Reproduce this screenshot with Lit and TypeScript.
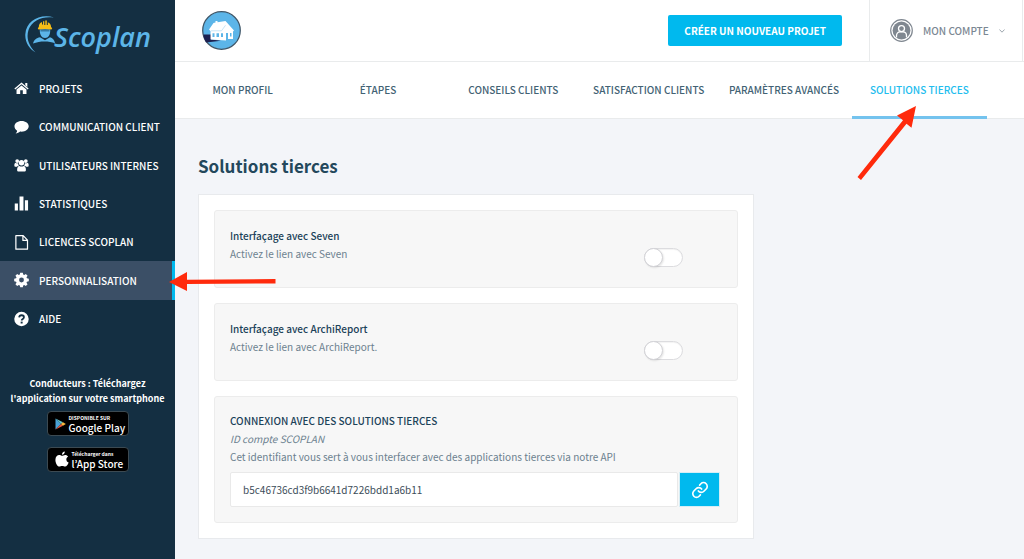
import { LitElement, html, css, svg, type TemplateResult } from "lit";
import { customElement, state } from "lit/decorators.js";
import { classMap } from "lit/directives/class-map.js";

const icons: Record<string, TemplateResult> = {
  home: svg`<path d="M8 2.2 15.6 8.6l-.9 1L8 4 1.300 9.600l-.9-1L8 2.200z"/><path d="M12 2.600h2.200v4.200L12 5z"/><path d="M8 5.200l5.300 4.500v4.600H9.400v-3.900H6.600v3.900H2.700V9.700z"/>`,
  comment: svg`<path d="M8.100 1.600c4.300 0 7.600 2.500 7.600 5.700S12.400 13 8.100 13c-.5 0-1 0-1.500-.1-1.500 1.300-3 1.900-4.800 2 .9-1 1.500-1.900 1.500-3C1.600 10.900.5 9.200.5 7.300c0-3.200 3.300-5.700 7.600-5.700z"/>`,
  users: svg`<circle cx="3.400" cy="3.800" r="2"/><circle cx="12.600" cy="3.800" r="2"/><circle cx="8" cy="5.600" r="2.900"/><path d="M.4 9V7.600C.4 6.300 1.200 5.700 2.400 6c.7.300 1.300.2 1.900 0 .1 1 .4 2 1 2.700-.9 0-1.700.5-2.200 1.100H1.400C.8 9.800.4 9.500.4 9z"/><path d="M15.600 9V7.600c0-1.300-.8-1.900-2-1.600-.7.300-1.300.2-1.900 0-.1 1-.4 2-1 2.700.9 0 1.700.5 2.200 1.100h1.700c.6 0 1-.3 1-.8z"/><path d="M3.300 13.200c0-2.600.8-4 2.400-4.200 1.400.9 3.200.9 4.600 0 1.600.2 2.400 1.600 2.400 4.200 0 1.200-.7 1.800-1.800 1.800H5.100c-1.100 0-1.800-.6-1.800-1.800z"/>`,
  stats: svg`<path d="M.8 8.500h3.400V16H.8zM5.900 1h4.200v15H5.900zM11.600 5h3.400v11h-3.400z"/>`,
  file: svg`<path d="M2 1.200h7.800L14.400 6v9.600H2z M9.500 1.500v4.800h4.700" fill="none" stroke="currentColor" stroke-width="1.300" stroke-linejoin="round"/>`,
  gear: svg`<path fill-rule="evenodd" d="M6.600.2h2.800l.4 2 1.200.5L12.600 1.500l1.900 1.900-1.200 1.700.5 1.100 2 .4v2.800l-2 .4-.5 1.100 1.200 1.700-1.900 1.900-1.700-1.200-1.100.5-.4 2H6.600l-.4-2-1.100-.5-1.700 1.200-1.900-1.900 1.200-1.700-.5-1.100-2-.4V6.600l2-.4.5-1.100-1.200-1.700 1.900-1.900 1.700 1.200 1.100-.5zM8 5.400a2.600 2.600 0 1 0 0 5.200 2.600 2.600 0 0 0 0-5.200z"/>`,
  help: svg`<circle cx="8" cy="8" r="7.700"/><path d="M5.500 6.300C5.600 4.800 6.600 4 8.100 4s2.500.9 2.500 2.100c0 1.800-2.400 1.800-2.400 3.500" fill="none" stroke="#142f42" stroke-width="1.900"/><path d="M7.100 10.800h2.100v2H7.100z" fill="#142f42"/>`,
};

const menu = [
  { label: "PROJETS", icon: "home" },
  { label: "COMMUNICATION CLIENT", icon: "comment" },
  { label: "UTILISATEURS INTERNES", icon: "users" },
  { label: "STATISTIQUES", icon: "stats" },
  { label: "LICENCES SCOPLAN", icon: "file" },
  { label: "PERSONNALISATION", icon: "gear" },
  { label: "AIDE", icon: "help" },
];

const tabs = [
  "MON PROFIL",
  "ÉTAPES",
  "CONSEILS CLIENTS",
  "SATISFACTION CLIENTS",
  "PARAMÈTRES AVANCÉS",
  "SOLUTIONS TIERCES",
];

const base = css`
  *, *::before, *::after { box-sizing: border-box; }
  a { color: inherit; text-decoration: none; }
  button, input { font: inherit; margin: 0; }
  h1, h2, p { margin: 0; }
  svg { display: block; flex: none; }
`;

@customElement("side-bar")
class SideBar extends LitElement {
  static styles = [base, css`
    :host { display: flex; flex-direction: column; background: #142f42; color: #fff; }
    .logo { display: flex; align-items: center; height: 69px; padding-left: 25px; color: #5cb5e8; }
    .name { font: italic 600 27px/36px "Open Sans", sans-serif; margin-left: -3px; padding-top: 4px; }
    .menu { display: grid; grid-auto-rows: 1fr; height: 269px; }
    .item { display: flex; align-items: center; gap: 10px; padding-left: 14px; font-size: 10px; font-weight: 500; border-right: 3px solid transparent; }
    .item.active { background: #3b4f66; border-color: #00b9ee; }
    .item svg { fill: currentColor; }
    .apps { display: flex; flex-direction: column; align-items: center; margin-top: 38px; font-size: 9px; font-weight: 700; line-height: 15px; text-align: center; }
    .badge { display: flex; align-items: center; gap: 3px; width: 82px; height: 25px; padding-left: 7px; border: 1px solid #3c4a52; border-radius: 4px; background: #000; text-align: left; white-space: nowrap; }
    .badge + .badge { margin-top: 11px; }
    .apps p { margin-bottom: 5px; white-space: nowrap; }
    .small { display: block; font-size: 5px; line-height: 7px; }
    .big { display: block; font-size: 10px; font-weight: 500; line-height: 13px; }
  `];
  render() {
    return html`
      <a class="logo" href="#" aria-label="Scoplan">
        <svg width="32" height="40" viewBox="0 0 32 40">
          <path d="M29 2.500C16-1.500 1 5 .3 19.500 0 27.500 4.500 34 10.500 37.500 3.500 30 1 23 3.500 15 7 5 18 .8 29 2.500z" fill="#5cb5e8"/>
          <path d="M14.800 14.500h10.400c.3 5-1.900 8.500-5.200 8.500s-5.500-3.500-5.200-8.500z" fill="#5cb5e8"/>
          <path d="M15.500 15.200h9v1.200h-9z" fill="#2c6a90"/>
          <path d="M8 28.500c1-4 3.500-5.500 7-6.300l5 3 5-3c2.500.8 4.500 2.800 5 6-6-2.300-15-2.500-22 .3z" fill="#5cb5e8"/>
          <path d="M13.800 12c0-2.500 1.200-4.300 3.200-5v2.500h1V6.300h1.300V10h1V5.500h1.500V10h1V7.200c2 .8 3.300 2.500 3.300 4.800l1.100 1.200-.7 1.300c-4-.8-9-.8-13 0l-.7-1.300z" fill="#f6bd16"/>
        </svg>
        <span class="name">Scoplan</span>
      </a>
      <nav class="menu">
        ${menu.map((m) => html`<a href="#" class=${classMap({ item: true, active: m.icon === "gear" })}>
          <svg width="15" height="16" viewBox="0 0 16 16">${icons[m.icon]}</svg><span>${m.label}</span></a>`)}
      </nav>
      <div class="apps">
        <p>Conducteurs : Téléchargez<br />l'application sur votre smartphone</p>
        <a class="badge" href="#">
          <svg width="11" height="12" viewBox="0 0 11 12"><path d="M.5.500 6 6 .5 11.500z" fill="#4aa3d8"/><path d="M.5.500 8 4.300 6 6z" fill="#5fc0c8"/><path d="M.5 11.500 8 7.700 6 6z" fill="#e4573d"/><path d="M8 4.300 10.800 6 8 7.700 6 6z" fill="#f8b93b"/></svg>
          <span><span class="small">DISPONIBLE SUR</span><span class="big">Google Play</span></span>
        </a>
        <a class="badge" href="#">
          <svg width="14" height="17" viewBox="0 0 14 17"><path d="M9.800.5c.1 1.600-1.200 3.200-2.800 3.200C6.800 2.200 8.200.7 9.800.5zM7.200 4.800c.7 0 1.600-.9 3-.9 1.200 0 2.300.6 2.900 1.600-2.600 1.500-2.200 5 .5 6.100-.6 1.800-2 4-3.500 4-1.200 0-1.500-.7-2.900-.7s-1.800.7-2.900.7C2.500 15.600.4 12 .4 8.900c0-3.200 1.900-4.900 3.800-4.900 1.300 0 2.300.8 3 .8z" fill="#fff"/></svg>
          <span><span class="small">Télécharger dans</span><span class="big">l’App Store</span></span>
        </a>
      </div>`;
  }
}

@customElement("toggle-panel")
class TogglePanel extends LitElement {
  static properties = { heading: {}, text: {} };
  declare heading: string;
  declare text: string;
  static styles = [base, css`
    :host { display: block; }
    .panel { display: flex; justify-content: space-between; padding: 16px 54px 19px 15px; border: 1px solid #ececec; border-radius: 3px; background: #f7f7f7; }
    .title { display: block; color: #1b4259; font-size: 10px; font-weight: 500; line-height: 18px; }
    .text { font-size: 10px; line-height: 17px; padding-bottom: 6px; }
    .switch { appearance: none; display: grid; align-items: center; align-self: end; width: 39px; height: 19px; border: 1px solid #dcdcdf; border-radius: 10px; background: #fff; margin: 0 0 1px; box-shadow: inset 0 1px 1px #0000000d; }
    .switch::before { content: ""; width: 19px; height: 19px; margin: -1px; border: 1px solid #d2d2d6; border-radius: 50%; background: #fff; box-shadow: 1px 1px 2px #0000001a; }
    .switch:checked { background: #00b9ee; }
    .switch:checked::before { margin-left: 19px; }
  `];
  render() {
    return html`<section class="panel">
      <div><label class="title" for="switch">${this.heading}</label><p class="text">${this.text}</p></div>
      <input class="switch" id="switch" type="checkbox" role="switch" />
    </section>`;
  }
}

@customElement("app-root")
class AppRoot extends LitElement {
  @state() private active = 5;

  static styles = [base, css`
    :host { position: relative; display: grid; grid-template-columns: 175px minmax(0, 1fr); min-height: 100vh; overflow: hidden; background: #f3f5f9; color: #6c818f; font-family: "Source Sans Pro", "Noto Sans CJK JP", sans-serif; font-size: 10px; }
    .top { display: flex; align-items: stretch; height: 62px; padding: 0 1px 0 27px; border-bottom: 1px solid #e9ebec; background: #fff; }
    .house { align-self: center; margin-right: auto; }
    .create { align-self: center; height: 31px; padding: 0 16px; margin-right: 27px; border: 0; border-radius: 2px; background: #00b9ee; color: #fff; font-weight: 700; line-height: 31px; }
    .account { display: flex; align-items: center; gap: 10px; width: 154px; padding: 0 0 0 20px; border: solid #e9ebec; border-width: 0 1px; background: none; color: #7b8893; font-weight: 500; }
    .tabs { display: grid; grid-template-columns: repeat(6, 1fr); height: 57px; padding-right: 37px; border-bottom: 1px solid #e9ebec; background: #fff; }
    .tab { padding: 0; border: 0; border-bottom: 3px solid transparent; margin-bottom: -1px; background: none; color: #426274; font-weight: 500; white-space: nowrap; }
    .tab.active { color: #22bdee; border-color: #74c3ee; }
    .content { padding: 33px 23px 20px; }
    .heading { color: #23485c; font-size: 17px; font-weight: 700; line-height: 28px; }
    .card { display: grid; gap: 15px; max-width: 556px; margin-top: 14px; padding: 15px; border: 1px solid #e8eaed; background: #fff; }
    .api { padding: 15px 17px 15px 15px; border: 1px solid #ececec; border-radius: 3px; background: #f7f7f7; line-height: 18px; }
    .title { color: #1b4259; font-size: 10px; font-weight: 500; }
    .id { font-style: italic; }
    .row { display: flex; gap: 1px; margin-top: 6px; }
    .field { flex: 1; min-width: 0; height: 35px; padding: 0 12px; border: 1px solid #e9e9e9; border-radius: 2px; background: #fff; color: #3c4d59; }
    .copy { display: grid; place-items: center; width: 41px; height: 35px; padding: 0; border: 1px solid #d5eef6; background: #00b9ee; color: #fff; }
    .arrows { position: absolute; left: 0; top: 0; pointer-events: none; }
  `];

  render() {
    return html`
      <side-bar></side-bar>
      <main>
        <header class="top">
          <svg class="house" width="39" height="39" viewBox="0 0 39 39">
            <circle cx="19.500" cy="19.500" r="18.800" fill="#5cb5e8" stroke="#3f5566" stroke-width="1.200"/>
            <path d="M1.500 23.500H9v5l10 1.200-15 1.800C2.500 29 1.500 26 1.500 23.500z" fill="#1d2150"/>
            <path d="M7 18.500l4.500-6.500 2-.5v-1.500h2v1.200L23.500 10l8.500 9.500-1 1V28h-5v-6h-2v7.500L8.500 28.500V20z" fill="#fff"/>
            <path d="M9 19.800h10.500l4-5.500" fill="none" stroke="#b9def4" stroke-width=".8"/>
            <path d="M10.500 22.300h2v3.700h-2zM14.500 22.300h2.500v3.700h-2.500zM19 22.300h2v3.700h-2zM28 22h1.500v3.500H28zM24 22h1.500v6.500H24z" fill="#5cb5e8"/>
          </svg>
          <button class="create">CRÉER UN NOUVEAU PROJET</button>
          <button class="account">
            <svg width="23" height="23" viewBox="0 0 23 23" fill="none">
              <circle cx="11.500" cy="11.500" r="10.800" stroke="#7f8790" stroke-width="1.200"/>
              <circle cx="11.500" cy="11.500" r="8.900" fill="#7f8790"/>
              <circle cx="11.500" cy="9.600" r="3" stroke="#fff" stroke-width="1.300"/>
              <path d="M6.500 18.300v-1.600c0-2.300 1.600-3.900 3.600-3.900h2.800c2 0 3.600 1.600 3.600 3.900v1.600" stroke="#fff" stroke-width="1.300"/>
            </svg>
            <span>MON COMPTE</span>
            <svg width="6" height="6" viewBox="0 0 6 6" fill="none" stroke="#9ba5ad"><path d="M.4 1.500 3 4.200l2.600-2.700"/></svg>
          </button>
        </header>
        <nav class="tabs">
          ${tabs.map((t, i) => html`<button class=${classMap({ tab: true, active: i === this.active })} @click=${() => (this.active = i)}>${t}</button>`)}
        </nav>
        <div class="content">
          <h1 class="heading">Solutions tierces</h1>
          <div class="card">
            <toggle-panel heading="Interfaçage avec Seven" text="Activez le lien avec Seven"></toggle-panel>
            <toggle-panel heading="Interfaçage avec ArchiReport" text="Activez le lien avec ArchiReport."></toggle-panel>
            <section class="api">
              <h2 class="title">CONNEXION AVEC DES SOLUTIONS TIERCES</h2>
              <p class="id">ID compte SCOPLAN</p>
              <label for="key">Cet identifiant vous sert à vous interfacer avec des applications tierces via notre API</label>
              <div class="row">
                <input class="field" id="key" type="text" readonly .value=${"b5c46736cd3f9b6641d7226bdd1a6b11"} />
                <button class="copy" aria-label="Copier le lien">
                  <svg width="18" height="18" viewBox="0 0 24 24" fill="none" stroke="currentColor" stroke-width="2.200" stroke-linecap="round" stroke-linejoin="round"><path d="M9.800 13.200a4.900 4.900 0 0 0 7.400.5l3-3a4.900 4.900 0 0 0-7-7l-1.700 1.700M14.200 10.800a4.900 4.900 0 0 0-7.400-.5l-3 3a4.900 4.900 0 0 0 7 7l1.700-1.700"/></svg>
                </button>
              </div>
            </section>
          </div>
        </div>
      </main>
      <svg class="arrows" width="1024" height="300" viewBox="0 0 1024 300" fill="#ff2a0c" aria-hidden="true">
        <path d="M169 282l18-10v7.800l88.500-.8v4.500l-88.500.5v7z"/>
        <path d="M916 106l-19 9.500 6 4.800L857.500 177l3.500 3 45.500-56.300 5 4z"/>
      </svg>`;
  }
}
